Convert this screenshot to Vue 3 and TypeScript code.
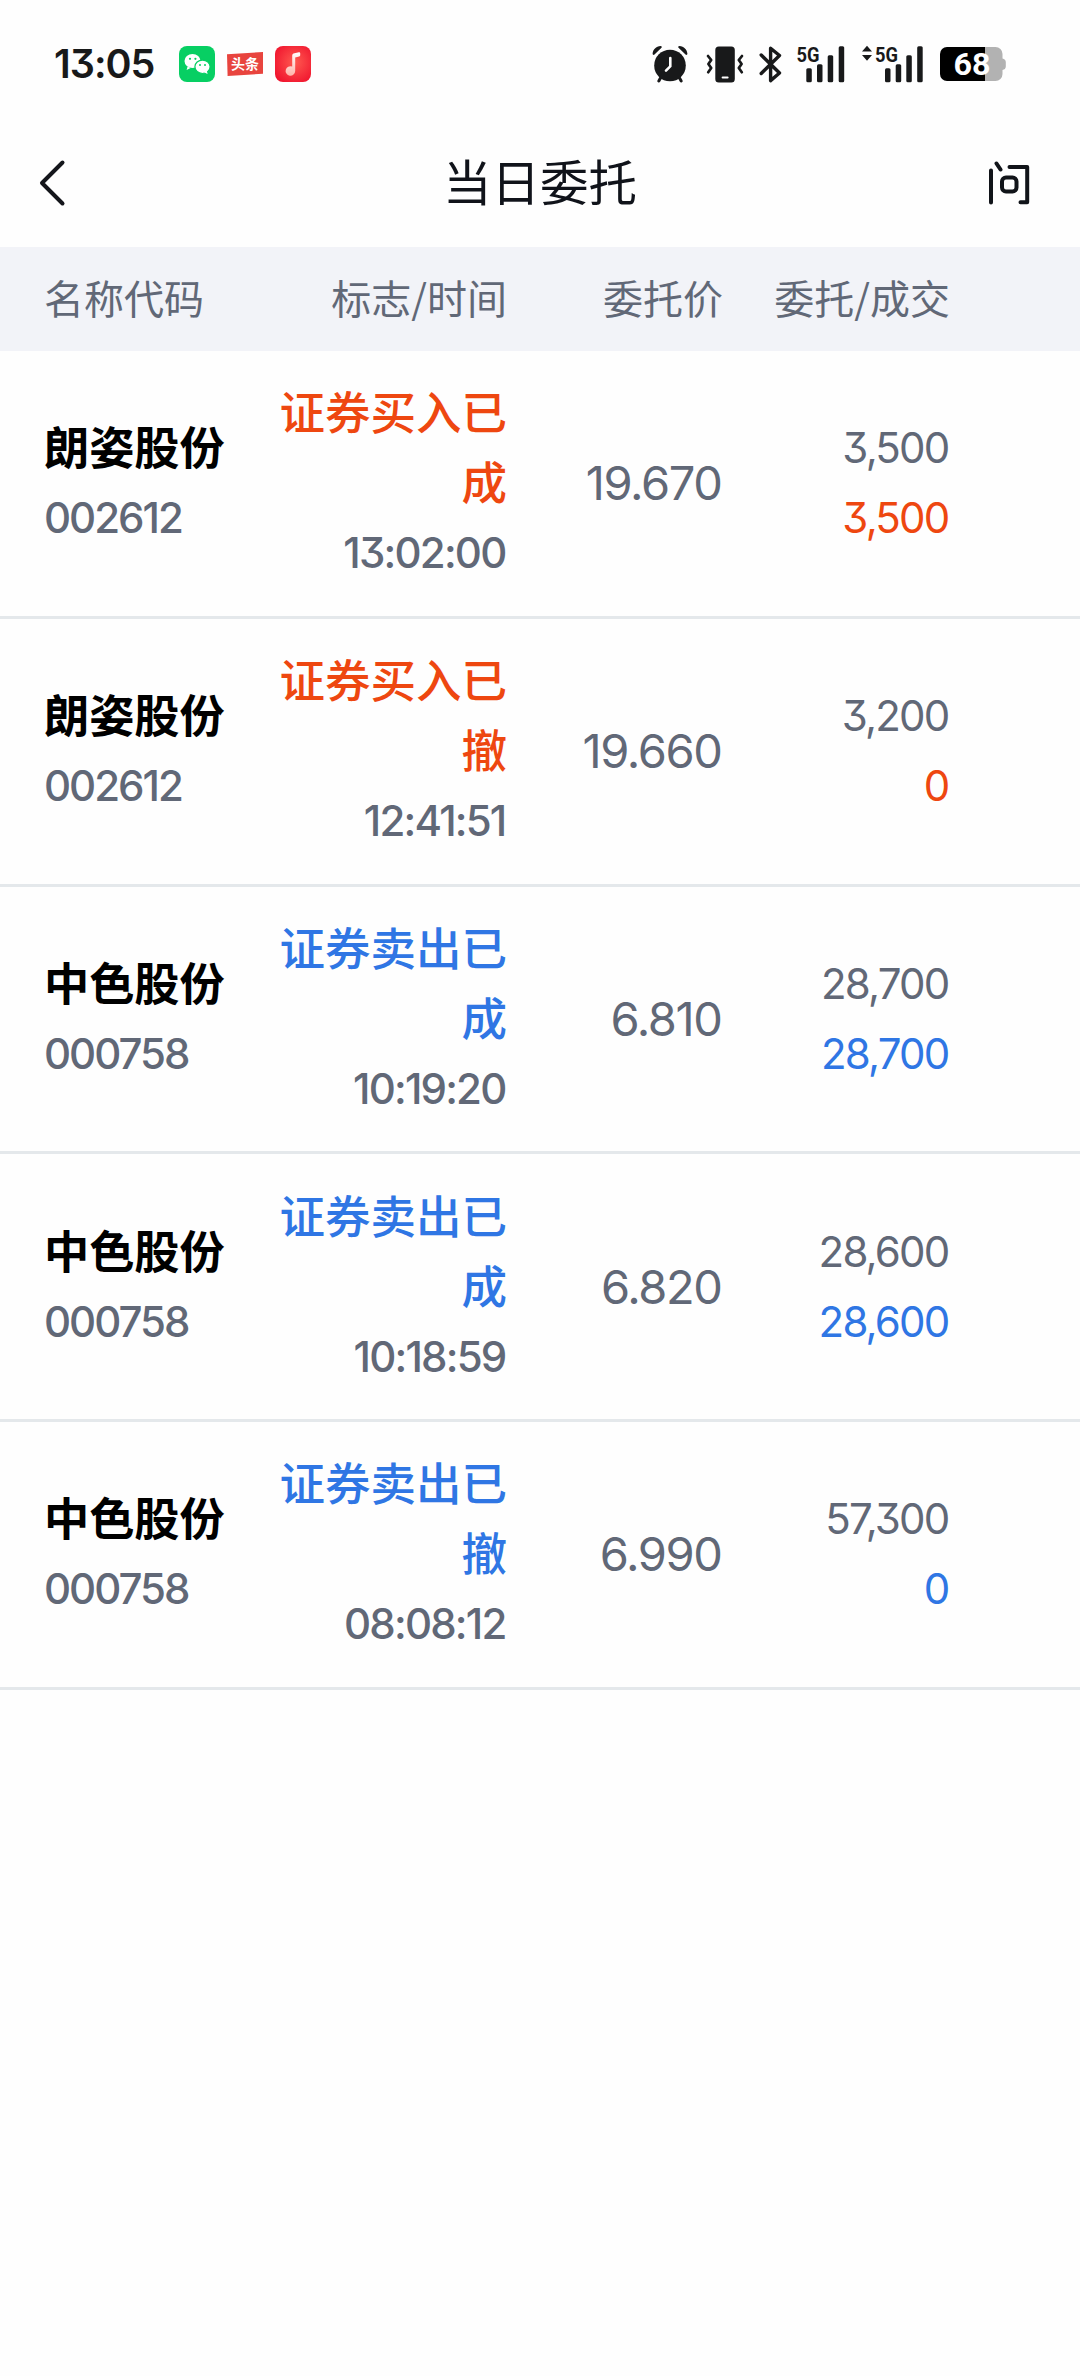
<script setup lang="ts">
interface Order {
  name: string
  code: string
  side: 'buy' | 'sell'
  status: string
  time: string
  price: string
  amount: string
  filled: string
}

const orders: Order[] = [
  { name: '朗姿股份', code: '002612', side: 'buy', status: '证券买入已成', time: '13:02:00', price: '19.670', amount: '3,500', filled: '3,500' },
  { name: '朗姿股份', code: '002612', side: 'buy', status: '证券买入已撤', time: '12:41:51', price: '19.660', amount: '3,200', filled: '0' },
  { name: '中色股份', code: '000758', side: 'sell', status: '证券卖出已成', time: '10:19:20', price: '6.810', amount: '28,700', filled: '28,700' },
  { name: '中色股份', code: '000758', side: 'sell', status: '证券卖出已成', time: '10:18:59', price: '6.820', amount: '28,600', filled: '28,600' },
  { name: '中色股份', code: '000758', side: 'sell', status: '证券卖出已撤', time: '08:08:12', price: '6.990', amount: '57,300', filled: '0' },
]
</script>

<template>
  <div class="screen">
    <div class="statusbar">
      <div class="side">
        <span class="clock">13:05</span>
        <svg class="app wechat" width="36" height="36" viewBox="0 0 36 36">
          <rect width="36" height="36" rx="8" fill="#07cf63" />
          <path d="M8.600 20.600 7.600 24l4-2z" fill="#fff" />
          <ellipse cx="13.500" cy="15" rx="8" ry="7" fill="#fff" />
          <ellipse cx="23.500" cy="20.800" rx="7.600" ry="6.700" fill="#fff" stroke="#07cf63" stroke-width="1.200" />
          <path d="M25 26.200 28.600 28l-.8-3.400z" fill="#fff" />
          <g fill="#07cf63">
            <circle cx="11" cy="12.800" r="1.100" /><circle cx="16.400" cy="12.800" r="1.100" />
            <circle cx="21" cy="19" r="1" /><circle cx="26" cy="19" r="1" />
          </g>
        </svg>
        <svg class="app" width="36" height="24" viewBox="0 0 36 24">
          <path d="M0 2.200 36 0v21.800L.6 24z" fill="#e8443e" />
          <text x="18" y="17.400" text-anchor="middle" class="toutiao">头条</text>
        </svg>
        <svg class="app" width="36" height="36" viewBox="0 0 36 36">
          <defs>
            <radialGradient id="music" cx="55%" cy="45%" r="65%">
              <stop offset="0" stop-color="#ff5a50" /><stop offset="1" stop-color="#f0142e" />
            </radialGradient>
            <linearGradient id="note" x1="0" y1="0" x2="0" y2="1">
              <stop offset="0" stop-color="#fff" /><stop offset="1" stop-color="#ffb3a8" />
            </linearGradient>
          </defs>
          <rect width="36" height="36" rx="8" fill="url(#music)" />
          <path d="M17.200 9.800c0-1.600.9-2.300 2.300-2.600l4.400-1c.8-.2 1.300.2 1.300 1v2c0 .7-.3 1.100-1 1.300l-4 1v13.500a4.800 4.800 0 1 1-3-4.500z" fill="url(#note)" />
        </svg>
      </div>
      <div class="side">
        <svg width="38" height="38" viewBox="0 0 38 38">
          <path d="M9.500 33 7.800 36M28.500 33l1.700 3" stroke="#18191a" stroke-width="3" stroke-linecap="round" fill="none" />
          <path d="M1.600 8.800C1.900 4.500 5 1.300 9.600 1c1 0 1.600 1 .9 1.800L3.500 9.500c-.8.800-1.900.4-1.900-.7zM36.400 8.800C36.100 4.500 33 1.300 28.400 1c-1 0-1.600 1-.9 1.800l7 6.700c.8.800 1.900.4 1.900-.7z" fill="#18191a" />
          <circle cx="19" cy="20.500" r="15.800" fill="#18191a" />
          <path d="M19.300 13v8.300L15 25.600" stroke="#fff" stroke-width="2.600" fill="none" stroke-linecap="round" />
        </svg>
        <svg class="vibrate" width="38" height="38" viewBox="0 0 38 38">
          <rect x="9.300" y="1.500" width="19.500" height="36" rx="3.500" fill="#18191a" />
          <rect x="15.600" y="31.600" width="7" height="2" rx="1" fill="#fff" />
          <path d="m2 11 3.200 4L2.400 19l2.800 4-3 4.200M36 11l-3.200 4 2.800 4-2.800 4 3 4.200" fill="none" stroke="#18191a" stroke-width="2.700" stroke-linecap="round" stroke-linejoin="round" />
        </svg>
        <svg class="bt" width="24" height="38" viewBox="0 0 24 38">
          <path d="M2.200 10 20.500 28 11.600 35.600V3.200L20.500 10.500 2.200 28.500" fill="none" stroke="#18191a" stroke-width="3.400" stroke-linecap="round" stroke-linejoin="round" />
        </svg>
        <svg class="sig1" width="50" height="38" viewBox="0 0 50 38">
          <text x="0.500" y="16.600" class="net" textLength="23" lengthAdjust="spacingAndGlyphs">5G</text>
          <g fill="#18191a">
            <rect x="10.300" y="23.300" width="5.500" height="14" rx="1.500" />
            <rect x="21" y="19.300" width="5.500" height="18" rx="1.500" />
            <rect x="31.700" y="10.300" width="5.500" height="27" rx="1.500" />
            <rect x="42.700" y="1.300" width="5.500" height="36" rx="1.500" />
          </g>
        </svg>
        <svg class="sig2" width="62" height="38" viewBox="0 0 62 38">
          <path d="M0 6.500 5 .8l5 5.700zM0 10h10l-5 5.700z" fill="#18191a" />
          <text x="13" y="16.600" class="net" textLength="23" lengthAdjust="spacingAndGlyphs">5G</text>
          <g fill="#18191a">
            <rect x="23" y="23.300" width="5.500" height="14" rx="1.500" />
            <rect x="33.700" y="19.300" width="5.500" height="18" rx="1.500" />
            <rect x="44.300" y="10.300" width="5.500" height="27" rx="1.500" />
            <rect x="55.200" y="1.300" width="5.500" height="36" rx="1.500" />
          </g>
        </svg>
        <svg class="battery" width="66" height="34" viewBox="0 0 66 34">
          <path d="M45 0h10.500a7 7 0 0 1 7 7v4.500c2 .3 3.300 1.600 3.300 3.500v4.500c0 2-1.300 3.200-3.300 3.500v4a7 7 0 0 1-7 7H45z" fill="#b2b2b2" />
          <path d="M7 0h38v34H7a7 7 0 0 1-7-7V7a7 7 0 0 1 7-7z" fill="#000" />
          <text x="32" y="28" text-anchor="middle" class="pct" textLength="37" lengthAdjust="spacingAndGlyphs">68</text>
        </svg>
      </div>
    </div>

    <header class="nav">
      <svg class="back" width="28" height="48" viewBox="0 0 28 48">
        <path d="M23.500 3.500 3 24l20.500 20.500" fill="none" stroke="#14161b" stroke-width="4" stroke-linecap="round" stroke-linejoin="round" />
      </svg>
      <h1>当日委托</h1>
      <svg class="ask" width="44" height="46" viewBox="0 0 44 46">
        <g fill="none" stroke="#111419" stroke-width="4" stroke-linecap="round" stroke-linejoin="round">
          <path d="M3 10.500V42.500M8.500 3.500l4 6M21.500 7H39.200V42.300H32.500" />
          <rect x="14" y="17.500" width="14.500" height="14" rx="4" />
        </g>
      </svg>
    </header>

    <div class="grid head">
      <span>名称代码</span>
      <span class="r">标志/时间</span>
      <span class="r">委托价</span>
      <span class="r">委托/成交</span>
    </div>

    <div v-for="(o, i) in orders" :key="i" class="grid row" :class="o.side">
      <div>
        <div class="name">{{ o.name }}</div>
        <div class="num mid code">{{ o.code }}</div>
      </div>
      <div class="r state">
        <div class="status">{{ o.status }}</div>
        <div class="num mid">{{ o.time }}</div>
      </div>
      <div class="num price r">{{ o.price }}</div>
      <div class="r">
        <div class="num">{{ o.amount }}</div>
        <div class="num filled">{{ o.filled }}</div>
      </div>
    </div>
  </div>
</template>

<style>
body {
  background: #fff;
}
</style>

<style scoped>
.screen {
  width: 1080px;
  height: 2376px;
  background: #fefefe;
  font-family: 'Noto Sans CJK SC', sans-serif;
  color: #616877;
  overflow: hidden;
}
.statusbar {
  height: 128px;
  box-sizing: border-box;
  padding: 0 74px 0 54px;
  display: flex;
  align-items: center;
  justify-content: space-between;
}
.side {
  display: flex;
  align-items: center;
}
.side svg {
  display: block;
  flex: none;
  overflow: visible;
}
.clock {
  width: 113px;
  font: 600 39.500px/60px Inter, sans-serif;
  font-feature-settings: 'cv09';
  letter-spacing: -1px;
  color: #18191a;
}
.app {
  margin-left: 12px;
}
.toutiao {
  font: 700 14px 'Noto Sans CJK SC', sans-serif;
  fill: #fff;
}
.net {
  font: 700 21px Roboto, sans-serif;
  fill: #18191a;
}
.pct {
  font: 700 31px Roboto, sans-serif;
  fill: #fff;
}
.vibrate { margin-left: 17px; }
.bt { margin-left: 15px; }
.sig1 { margin-left: 13px; }
.sig2 { margin-left: 16px; }
.battery { margin-left: 16px; }
.nav {
  height: 119px;
  box-sizing: border-box;
  padding: 0 48px 10px 39px;
  display: grid;
  grid-template-columns: 44px 1fr 44px;
  align-items: center;
}
.nav h1 {
  margin: 0;
  padding: 0 0 6px 9px;
  font-size: 48.500px;
  line-height: 70px;
  font-weight: 400;
  text-align: center;
  color: #10131a;
}
.grid {
  display: grid;
  grid-template-columns: 200px 263px 216px 227px;
  padding-left: 44px;
  align-items: center;
}
.r {
  text-align: right;
}
.head {
  height: 104px;
  box-sizing: border-box;
  padding-bottom: 5px;
  background: #f2f3f8;
  font-size: 40px;
  line-height: 60px;
}
.row {
  height: 267.750px;
  box-sizing: border-box;
  border-bottom: 3px solid #e4e8eb;
  line-height: 70px;
}
.name {
  margin-top: -2px;
  padding-bottom: 2px;
  font-size: 45.200px;
  font-weight: 700;
  color: #000;
}
.status {
  margin-top: -3px;
  padding-bottom: 3px;
  font-size: 45.500px;
  font-weight: 500;
}
.num {
  font-family: Inter, sans-serif;
  font-feature-settings: 'cv09';
  font-size: 42px;
  letter-spacing: -1.800px;
  height: 70px;
}
.r .num,
.num.r {
  padding-right: 1.500px;
}
.mid {
  font-weight: 500;
}
.code {
  letter-spacing: -2px;
}
.price {
  font-size: 47px;
  letter-spacing: -1.400px;
}
.buy .status,
.buy .filled {
  color: #ee4710;
}
.sell .status,
.sell .filled {
  color: #2f76e4;
}
</style>
